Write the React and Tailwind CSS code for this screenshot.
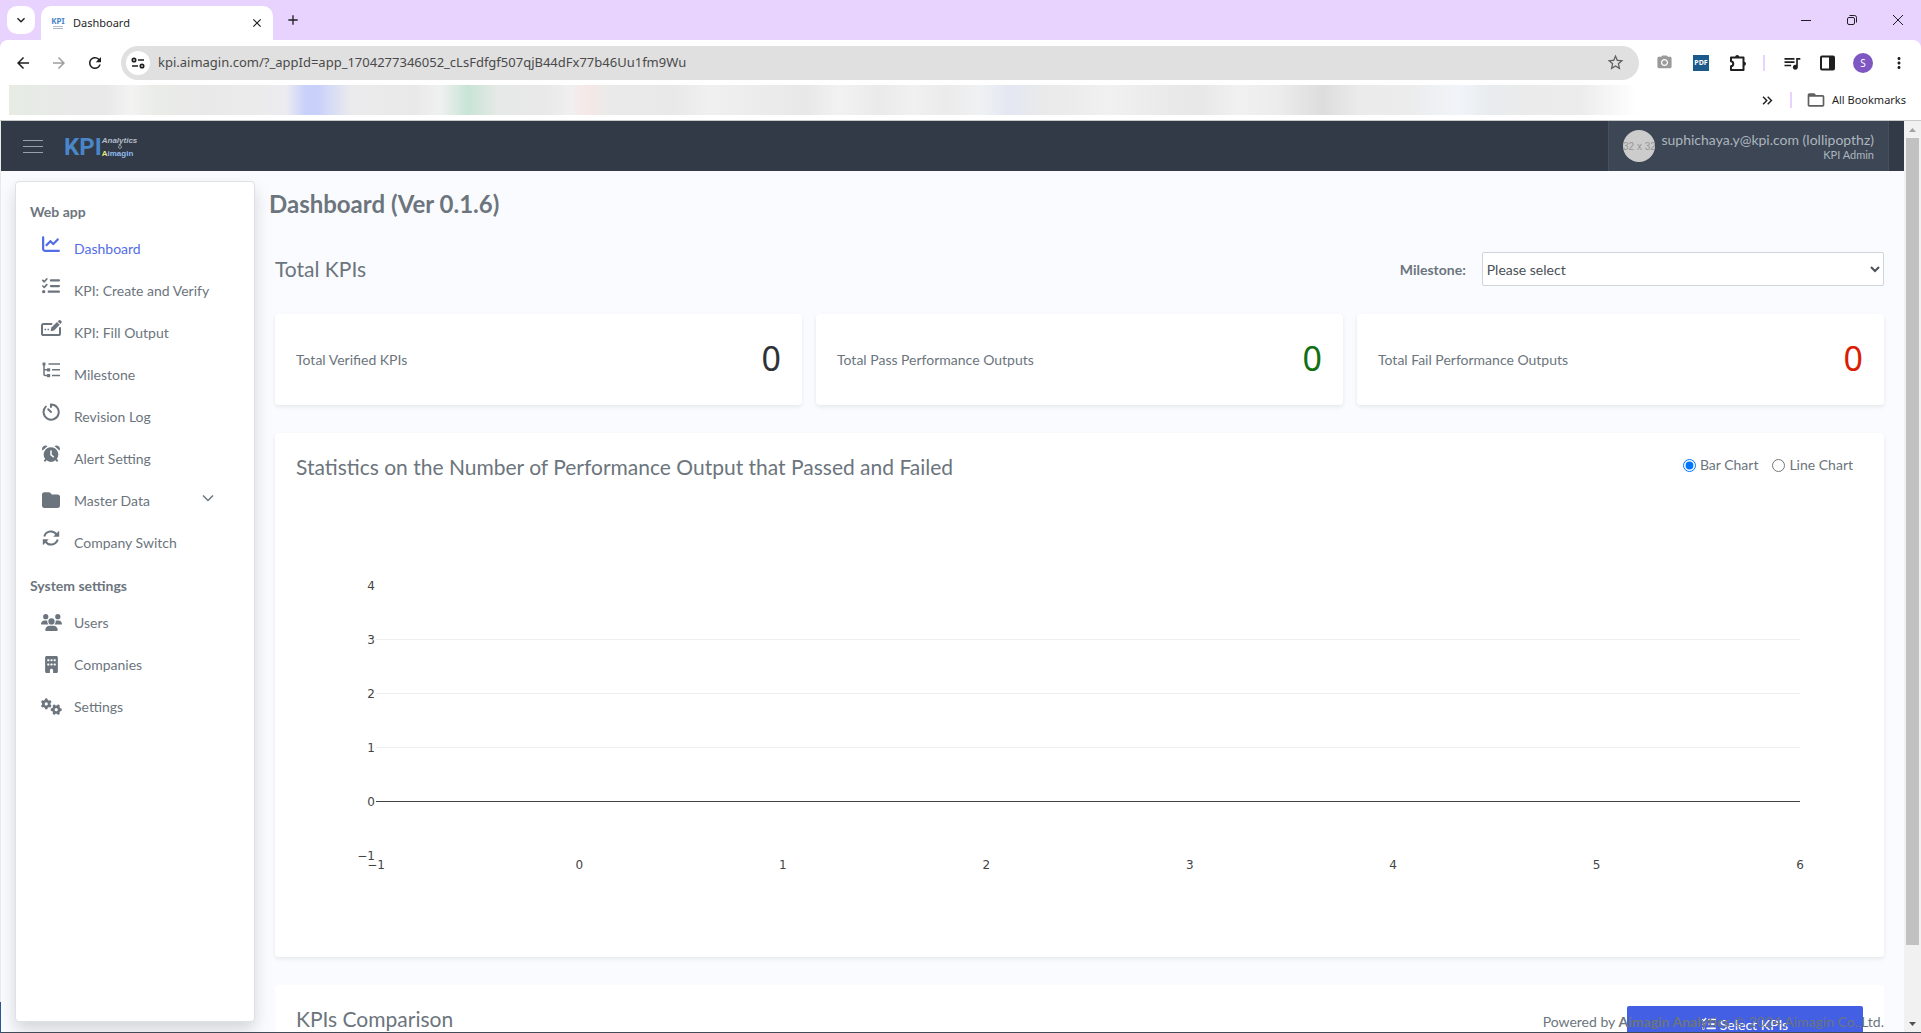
import { useState } from "react";
import {
  FaBuilding,
  FaChartLine,
  FaFolder,
  FaGears,
  FaListCheck,
  FaUsers,
} from "react-icons/fa6";
import {
  MdAdd,
  MdArrowBack,
  MdArrowForward,
  MdClose,
  MdKeyboardArrowDown,
  MdKeyboardDoubleArrowRight,
  MdMoreVert,
  MdFolderOpen,
  MdPhotoCamera,
  MdQueueMusic,
  MdRefresh,
  MdStarBorder,
} from "react-icons/md";

/* Sidebar icons that the icon packages do not have */
function FillOutputIcon() {
  return (
    <svg viewBox="0 0 22 18" className="h-[18px] w-[22px]" fill="none" stroke="currentColor" strokeWidth="2">
      <path d="M11.5 5H3.6C2.5 5 2 5.6 2 6.6v7.8C2 15.400 2.500 16 3.600 16h14.800c1 0 1.600-.6 1.600-1.600V9" strokeLinecap="round" />
      <path d="M4.500 10.500h1.600M7.500 10.500h1.600" strokeWidth="1.600" />
      <path d="M10.600 12.200l.8-3.600 5.600-5.500 2.700 2.700-5.600 5.600z" fill="currentColor" stroke="none" />
      <path d="M17.700 2.400l1-1c.6-.6 1.300-.6 1.900 0l.7.7c.6.6.6 1.300 0 1.900l-1 1z" fill="currentColor" stroke="none" />
    </svg>
  );
}

function MilestoneIcon() {
  return (
    <svg viewBox="0 0 18 16" className="h-4 w-[18px]" fill="none" stroke="currentColor" strokeWidth="1.500">
      <path d="M2 2v10.500c0 .6.300 1 1 1h3M2 7.700h4" />
      <path d="M6.500 2H18M10 7.700h8M10 13.500h8" />
      <rect x=".5" y=".5" width="3" height="3" rx=".6" fill="currentColor" stroke="none" />
      <rect x="5" y="6.200" width="3.200" height="3.200" rx=".6" fill="currentColor" stroke="none" />
      <rect x="5" y="12" width="3.200" height="3.200" rx=".6" fill="currentColor" stroke="none" />
    </svg>
  );
}

function TimerIcon() {
  return (
    <svg viewBox="0 0 18 18" className="h-[18px] w-[18px]" fill="none" stroke="currentColor" strokeWidth="2" strokeLinecap="round">
      <path d="M3.800 3.600A7.600 7.600 0 1 0 9 1.400V4" />
      <path d="M6.200 6.200L9 9" />
    </svg>
  );
}

function AlarmIcon() {
  return (
    <svg viewBox="0 0 18 18" className="h-[18px] w-[18px]">
      <path d="M9 2.200a7.300 7.300 0 0 1 5.800 11.700l1.500 1.600-1.300 1.400-1.600-1.600a7.300 7.300 0 0 1-8.800 0L3 16.900l-1.300-1.400 1.500-1.600A7.300 7.300 0 0 1 9 2.200z" fill="currentColor" />
      <path d="M.6 5.600A3.300 3.300 0 0 1 1.400 1.300C2.600.2 4.400.2 5.600 1zM17.400 5.600a3.300 3.300 0 0 0-.8-4.300C15.400.2 13.600.2 12.400 1z" fill="currentColor" />
      <path d="M9 6v4l2.200 1.700" fill="none" stroke="white" strokeWidth="1.500" strokeLinecap="round" />
    </svg>
  );
}

function SwitchIcon() {
  return (
    <svg viewBox="0 0 18 16" className="h-4 w-[18px]" fill="none" stroke="currentColor" strokeWidth="2">
      <path d="M2.300 6.400A6.800 6.800 0 0 1 14.600 4.600M15.700 9.600A6.800 6.800 0 0 1 3.400 11.400" />
      <path d="M17.200.8v6h-6zM.8 15.200v-6h6z" fill="currentColor" stroke="none" />
    </svg>
  );
}

const webApp = [
  { label: "Dashboard", icon: <FaChartLine size={18} />, active: true, raised: true },
  { label: "KPI: Create and Verify", icon: <FaListCheck size={18} />, raised: true },
  { label: "KPI: Fill Output", icon: <FillOutputIcon />, raised: true },
  { label: "Milestone", icon: <MilestoneIcon />, raised: true },
  { label: "Revision Log", icon: <TimerIcon />, raised: true },
  { label: "Alert Setting", icon: <AlarmIcon />, raised: true },
  { label: "Master Data", icon: <FaFolder size={18} />, expandable: true },
  { label: "Company Switch", icon: <SwitchIcon />, raised: true },
];

const systemSettings = [
  { label: "Users", icon: <FaUsers size={21} /> },
  { label: "Companies", icon: <FaBuilding size={17} /> },
  { label: "Settings", icon: <FaGears size={21} /> },
];

const totals = [
  { label: "Total Verified KPIs", value: 0, color: "text-[#2f3337]" },
  { label: "Total Pass Performance Outputs", value: 0, color: "text-[#127012]" },
  { label: "Total Fail Performance Outputs", value: 0, color: "text-[#d81e05]" },
];

const yTicks = [4, 3, 2, 1, 0, -1];
const xTicks = [-1, 0, 1, 2, 3, 4, 5, 6];
const tickText = (n) => (n < 0 ? `−${-n}` : `${n}`);

function BrowserBar() {
  return (
    <div className="shrink-0 bg-[#e8d3ff] font-['Noto_Sans',sans-serif] text-[#1f1f1f]">
      {/* Tabs */}
      <div className="flex h-10 items-center">
        <button aria-label="Search tabs" className="ml-[7px] flex h-7 w-7 items-center justify-center rounded-[10px] bg-white">
          <MdKeyboardArrowDown size={16} />
        </button>
        <div className="ml-1.5 flex h-[34px] w-[232px] items-center self-end rounded-t-[10px] bg-white pr-[9px] pl-2.5">
          <div className="flex w-[14px] flex-col items-center leading-none">
            <span className="text-[8px] leading-[8px] font-bold text-[#4a86c8]">KPI</span>
            <span className="mt-px h-px w-2.5 bg-[#b9bdc4]" />
            <span className="mt-px h-px w-2.5 bg-[#a9b9cc]" />
          </div>
          <span className="ml-2 flex-1 text-[11px]">Dashboard</span>
          <button aria-label="Close tab"><MdClose size={14} /></button>
        </div>
        <button aria-label="New tab" className="ml-3"><MdAdd size={16} /></button>
        <div className="ml-auto flex items-center gap-[34px] pr-[17px]">
          <button aria-label="Minimize">
            <svg width="12" height="12" viewBox="0 0 12 12" stroke="currentColor"><path d="M1 6.500h10" /></svg>
          </button>
          <button aria-label="Restore">
            <svg width="12" height="12" viewBox="0 0 12 12" fill="none" stroke="currentColor">
              <rect x="1.500" y="3.500" width="7" height="7" rx="1.500" />
              <path d="M3.500 1.500h5a2 2 0 0 1 2 2v5" />
            </svg>
          </button>
          <button aria-label="Close">
            <svg width="12" height="12" viewBox="0 0 12 12" stroke="currentColor"><path d="M1 1l10 10M11 1L1 11" /></svg>
          </button>
        </div>
      </div>

      {/* Toolbar */}
      <div className="flex h-[45px] items-center rounded-t-lg bg-white pr-[13px] pl-3.5">
        <button aria-label="Back"><MdArrowBack size={18} /></button>
        <button aria-label="Forward" className="ml-[18px] text-[#9f9f9f]"><MdArrowForward size={18} /></button>
        <button aria-label="Reload" className="ml-[18px]"><MdRefresh size={18} /></button>
        <div className="ml-[17px] flex h-[34px] flex-1 items-center rounded-full bg-[#e0e0e0] pr-3.5 pl-[5px]">
          <button aria-label="Site information" className="flex h-6 w-6 items-center justify-center rounded-full bg-white">
            <svg width="14" height="14" viewBox="0 0 14 14" fill="none" stroke="currentColor" strokeWidth="1.700">
              <circle cx="3" cy="4" r="1.700" />
              <path d="M7 4h6M1 10h6" />
              <circle cx="11" cy="10" r="1.700" />
            </svg>
          </button>
          <input
            aria-label="Address"
            readOnly
            value="kpi.aimagin.com/?_appId=app_1704277346052_cLsFdfgf507qjB44dFx77b46Uu1fm9Wu"
            className="ml-2 flex-1 bg-transparent text-[13px] text-[#4a4a4a] outline-none"
          />
          <button aria-label="Bookmark" className="text-[#5f5f5f]"><MdStarBorder size={19} /></button>
        </div>
        <div className="flex items-center pl-[17px]">
          <button aria-label="Screenshot" className="text-[#9a9a9a]"><MdPhotoCamera size={17} /></button>
          <button className="ml-5 h-4 w-4 bg-[#1d5a8c] text-center text-[7px] leading-4 font-bold text-white">PDF</button>
          <button aria-label="Extensions" className="ml-5">
            <svg width="18" height="18" viewBox="0 0 18 18" fill="none" stroke="currentColor" strokeWidth="2" strokeLinejoin="round">
              <path d="M2 3.500h12.500V16H2v-3.700c3-.4 3-4.700 0-5.100z" />
              <path d="M6.200 3a2 2 0 0 1 4 0zM15 7.700a2 2 0 0 1 0 4z" fill="currentColor" stroke="none" />
            </svg>
          </button>
          <span className="ml-4 h-4 w-0.5 bg-[#e8d3ff]" />
          <button aria-label="Media" className="ml-[17px]"><MdQueueMusic size={20} /></button>
          <button aria-label="Side panel" className="ml-[18px]">
            <svg width="15" height="16" viewBox="0 0 15 16"><rect x="1" y="1.500" width="13" height="13" rx="1" fill="none" stroke="currentColor" strokeWidth="2" /><path d="M9 1h5v14H9z" fill="currentColor" /></svg>
          </button>
          <button className="ml-[18px] h-5 w-5 rounded-full bg-[#7e57c2] text-center text-[10px] leading-5 text-white">S</button>
          <button aria-label="Menu" className="ml-[17px]"><MdMoreVert size={18} /></button>
        </div>
      </div>

      {/* Bookmarks */}
      <div className="flex h-9 items-start border-b border-[#c9c9c9] bg-white pr-[15px] pl-[9px]">
        <div className="h-[30px] flex-1 bg-[linear-gradient(to_right,#e6ece4_0%,#e9e9e9_4%,#e9e9e9_6%,#f2f3f2_7.500%,#eaece8_9%,#e9e9e9_12%,#ebebeb_15%,#ececf0_17%,#c9d1fb_18.200%,#c9d1fb_19%,#ebebed_21%,#e9e9e9_25%,#eff1f0_26.500%,#c8e4d6_28.200%,#e6e9e7_30%,#e9e9e9_33%,#f1efef_34.500%,#f5e8e7_35.500%,#eaeaea_37%,#e9e9e9_41%,#f0f0f0_43%,#e8e8e8_49%,#f1f2f1_51%,#eaeaea_53.500%,#f1f1f1_55.500%,#ebebeb_57.500%,#f0f1f3_59.500%,#e3e7f2_61.500%,#eaeaea_63.500%,#ebebeb_65%,#f1f1f1_67.500%,#eaeaea_71%,#e7e7e7_73%,#f1f1f1_75.500%,#ececec_78%,#dddddd_80.700%,#ebebeb_83%,#ececec_86%,#f1f4f9_89%,#e8ecee_91%,#ebebeb_93%,#ececec_96.500%,#ffffff_100%)]" />
        <div className="flex h-[30px] items-center pl-[122px]">
          <button aria-label="More bookmarks"><MdKeyboardDoubleArrowRight size={17} /></button>
          <span className="ml-3.5 h-4 w-0.5 bg-[#e8d3ff]" />
          <button className="ml-3.5 flex items-center gap-1.5 text-[11px]">
            <MdFolderOpen size={20} className="text-[#5f5f5f]" />
            All Bookmarks
          </button>
        </div>
      </div>
    </div>
  );
}

function Header() {
  return (
    <header className="flex h-[50px] shrink-0 items-center bg-[#313a46] pr-[15px] pl-[22px]">
      <button aria-label="Toggle menu" className="flex w-5 flex-col gap-[5px]">
        <span className="h-px w-full bg-[#98a0aa]" />
        <span className="h-px w-full bg-[#98a0aa]" />
        <span className="h-px w-full bg-[#98a0aa]" />
      </button>
      <a href="#" className="ml-[21px] flex items-center pt-px">
        <span className="font-[Roboto,sans-serif] text-[24px] leading-6 font-bold text-[#4a86c8]">KPI</span>
        <span className="flex flex-col font-['Liberation_Sans',sans-serif] text-[8px] leading-[9px] font-bold text-[#b3bac6]">
          <span className="italic">Analytics</span>
          <span className="flex justify-center"><span className="h-1 w-1 rounded-full border border-[#8b939d]" /></span>
          <span className="text-[#8fb8ec]"><span className="text-[#e4ea7a]">A</span>imagin</span>
        </span>
      </a>
      <button className="ml-auto flex h-full items-center border-x border-[#464f5b] bg-[#3c4655] px-3.5 text-[#adb5bd]">
        <span className="flex h-8 w-8 items-center justify-center overflow-hidden rounded-full bg-[#cccccc] font-['Liberation_Sans',sans-serif] text-[10px] whitespace-nowrap text-[#969696]">
          32 x 32
        </span>
        <span className="ml-1.5 flex flex-col items-end pt-0.5">
          <span className="text-[14px] leading-4">suphichaya.y@kpi.com (lollipopthz)</span>
          <span className="text-[11px] leading-[14px]">KPI Admin</span>
        </span>
      </button>
    </header>
  );
}

function NavItem({ item }) {
  return (
    <li>
      <a
        href="#"
        className={`flex h-[42px] items-center pl-6 text-[14px] ${
          item.active ? "text-[#536de6]" : "text-[#6c757d]"
        }`}
      >
        <span className={`flex w-[22px] justify-center ${item.raised ? "pb-2" : ""}`}>{item.icon}</span>
        <span className="ml-3">{item.label}</span>
        {item.expandable && (
          <svg viewBox="0 0 12 8" className="mr-10 mb-1 ml-auto h-2 w-3" fill="none" stroke="currentColor" strokeWidth="1.500">
            <path d="M1 1.500l5 5 5-5" />
          </svg>
        )}
      </a>
    </li>
  );
}

function Sidebar() {
  return (
    <aside className="mt-2.5 mb-2.5 ml-3.5 w-60 shrink-0 rounded-sm border border-[#dee2e6] bg-white pt-5 shadow-[0_8px_16px_rgba(0,0,0,0.15)]">
      <h2 className="pl-3.5 text-[14px] leading-5 font-bold text-[#6c757d]">Web app</h2>
      <ul className="mt-[5px]">
        {webApp.map((item) => (
          <NavItem key={item.label} item={item} />
        ))}
      </ul>
      <h2 className="mt-[13px] pl-3.5 text-[14px] leading-5 font-bold text-[#6c757d]">System settings</h2>
      <ul className="mt-[5px]">
        {systemSettings.map((item) => (
          <NavItem key={item.label} item={item} />
        ))}
      </ul>
    </aside>
  );
}

function EmptyChart() {
  return (
    <svg
      role="img"
      aria-label="Performance output chart"
      className="block h-[270px] w-full overflow-visible font-['DejaVu_Sans',sans-serif] text-[12px]"
      fill="#444"
    >
      {yTicks.map((n, i) => (
        <g key={n}>
          {n >= 0 && n < 4 && (
            <line x1="0" x2="100%" y1={i * 54} y2={i * 54} stroke={n === 0 ? "#444" : "#eee"} shapeRendering="crispEdges" />
          )}
          <text x="-1" y={i * 54 + 5} textAnchor="end">{tickText(n)}</text>
        </g>
      ))}
      {xTicks.map((n, i) => (
        <text key={n} x={`${(i / 7) * 100}%`} y="284" textAnchor="middle">{tickText(n)}</text>
      ))}
    </svg>
  );
}

export default function App() {
  const [chart, setChart] = useState("bar");

  return (
    <div className="relative flex h-screen flex-col overflow-hidden font-[Lato,sans-serif]">
      <BrowserBar />
      <div className="flex min-h-0 flex-1 border-b border-l border-b-[#414b58] border-l-[#e9e9e9]">
        <div className="relative flex min-w-0 flex-1 flex-col overflow-hidden bg-[#fafbfe] text-[#6c757d]">
          <Header />
          <div className="flex min-h-0 flex-1">
            <Sidebar />
            <main className="min-w-0 flex-1 overflow-hidden pr-5 pl-5">
              <h1 className="-ml-1.5 pt-[17px] text-[24px] leading-8 font-bold">Dashboard (Ver 0.1.6)</h1>

              <div className="mt-8 flex items-center">
                <h2 className="flex-1 text-[21px]">Total KPIs</h2>
                <label htmlFor="milestone" className="text-[14px] font-bold">Milestone:</label>
                <select
                  id="milestone"
                  className="ml-4 h-[34px] w-1/4 rounded-xs border border-[#ced4da] bg-white text-[14px] text-[#495057]"
                >
                  <option>Please select</option>
                </select>
              </div>

              {/* Totals */}
              <div className="mt-7 grid grid-cols-3 gap-3.5">
                {totals.map((t) => (
                  <div key={t.label} className="flex h-[91px] items-center justify-between rounded bg-white px-[21px] shadow-[0_2px_4px_rgba(0,0,0,0.08)]">
                    <span className="text-[14px]">{t.label}</span>
                    <span className={`pb-1 font-['Noto_Sans',sans-serif] text-[34px] leading-10 ${t.color}`}>{t.value}</span>
                  </div>
                ))}
              </div>

              {/* Statistics */}
              <section className="mt-7 h-[524px] rounded bg-white px-[21px] pt-[18px] shadow-[0_2px_4px_rgba(0,0,0,0.08)]">
                <div className="flex items-start justify-between">
                  <h2 className="text-[21px] leading-8">Statistics on the Number of Performance Output that Passed and Failed</h2>
                  <div className="flex gap-3.5 pr-2.5 text-[14px] leading-7">
                    <label className="flex items-center gap-1">
                      <input type="radio" name="chart" className="h-[13px] w-[13px]" checked={chart === "bar"} onChange={() => setChart("bar")} />
                      Bar Chart
                    </label>
                    <label className="flex items-center gap-1">
                      <input type="radio" name="chart" className="h-[13px] w-[13px]" checked={chart === "line"} onChange={() => setChart("line")} />
                      Line Chart
                    </label>
                  </div>
                </div>
                <div className="pt-[102px] pr-[63px] pl-20">
                  <EmptyChart />
                </div>
              </section>

              {/* Comparison */}
              <section className="mt-7 flex items-start justify-between rounded bg-white px-[21px] pt-[21px] pb-5">
                <h2 className="text-[21px] leading-[26px]">KPIs Comparison</h2>
                <button className="flex h-9 w-[236px] items-center justify-center gap-1 rounded-xs bg-[#435fe3] text-[14px] text-white">
                  <FaListCheck size={14} />
                  Select KPIs
                </button>
              </section>
            </main>
          </div>
          <footer className="absolute right-5 bottom-0 text-[14px] leading-5">
            Powered by <b>Aimagin Analytics</b> © 2024 Aimagin Co.,Ltd.
          </footer>
        </div>

        {/* Page scrollbar */}
        <div className="flex w-[17px] shrink-0 flex-col items-center justify-between bg-[#f1f1f1]">
          <svg width="17" height="17" viewBox="0 0 17 17" fill="#a3a3a3"><path d="M5 11l3.500-4 3.500 4z" /></svg>
          <div className="w-[13px] flex-1 pb-[70px]">
            <div className="h-full bg-[#c1c1c1]" />
          </div>
          <svg width="17" height="17" viewBox="0 0 17 17" fill="#505050"><path d="M5 7l3.500 4L12 7z" /></svg>
        </div>
      </div>
      <span className="absolute bottom-0 left-0 h-[31px] w-px bg-[#2b579a]" />
    </div>
  );
}
